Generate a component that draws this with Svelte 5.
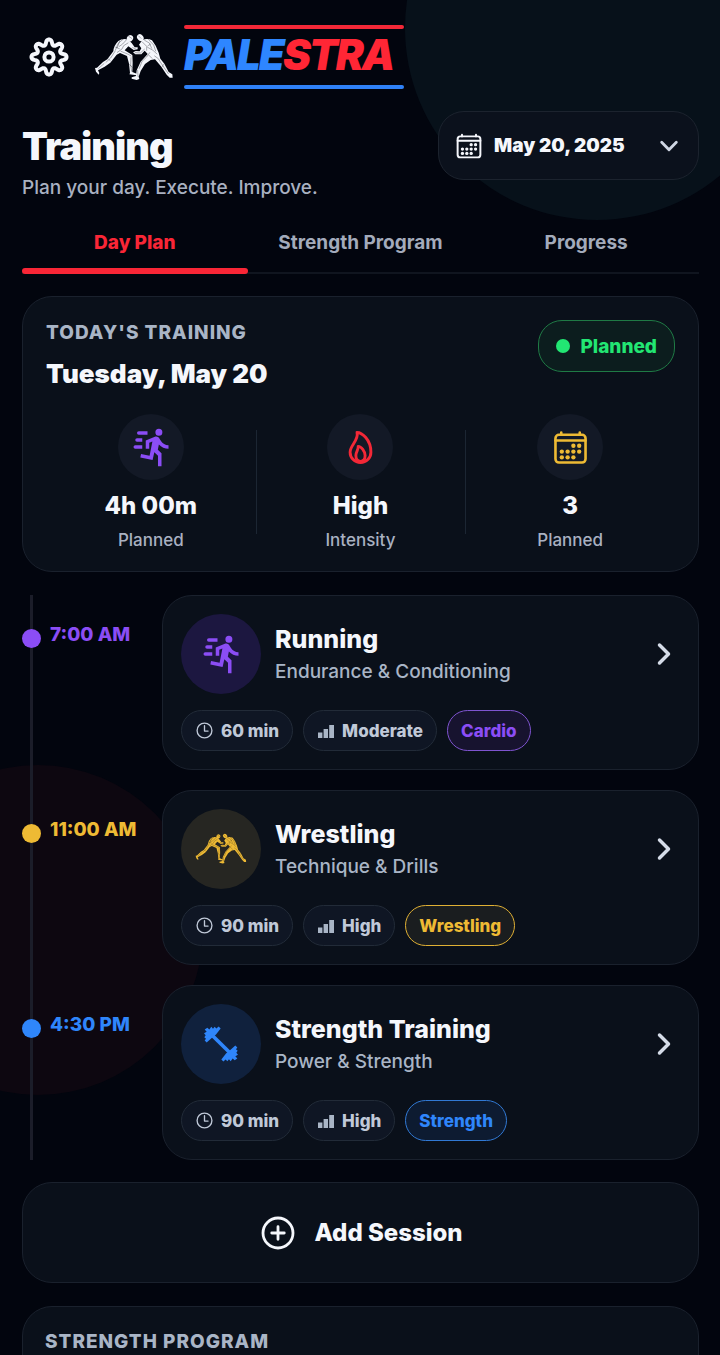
<script>
  const tabs = ['Day Plan', 'Strength Program', 'Progress'];
  let activeTab = $state('Day Plan');

  const stats = [
    { icon: 'run', color: '#8b4df5', value: '4h 00m', label: 'Planned' },
    { icon: 'flame', color: '#f32837', value: 'High', label: 'Intensity' },
    { icon: 'calendar', color: '#eeba34', value: '3', label: 'Planned' }
  ];

  const sessions = [
    { time: '7:00 AM', tone: 'purple', icon: 'run', title: 'Running', sub: 'Endurance & Conditioning', duration: '60 min', level: 'Moderate', tag: 'Cardio' },
    { time: '11:00 AM', tone: 'gold', icon: 'wrestlers', title: 'Wrestling', sub: 'Technique & Drills', duration: '90 min', level: 'High', tag: 'Wrestling' },
    { time: '4:30 PM', tone: 'blue', icon: 'dumbbell', title: 'Strength Training', sub: 'Power & Strength', duration: '90 min', level: 'High', tag: 'Strength' }
  ];

  // Eight-toothed cog outline, sampled around the circle
  const gear = (() => {
    const pts = [];
    for (let i = 0; i < 160; i++) {
      const a = (i / 160) * Math.PI * 2;
      const r = 14.9 + 2.6 * Math.tanh(1.3 * Math.cos(8 * a)) / Math.tanh(1.3);
      pts.push(`${(20 + r * Math.cos(a)).toFixed(2)} ${(20 + r * Math.sin(a)).toFixed(2)}`);
    }
    return 'M' + pts.join('L') + 'Z';
  })();
</script>

{#snippet icon(name, size)}
  {#if name === 'run'}
    <svg width={size} height={size} viewBox="0 0 24 24" fill="currentColor" aria-hidden="true">
      <path d="M16.5,5.5A2,2 0 0,0 18.5,3.5A2,2 0 0,0 16.5,1.5A2,2 0 0,0 14.5,3.5A2,2 0 0,0 16.5,5.5M12.9,19.4L13.9,15L16,17V23H18V15.5L15.9,13.5L16.5,10.5C17.89,12.09 19.89,13 22,13V11C20.24,11.03 18.6,10.11 17.7,8.6L16.7,7C16.34,6.4 15.7,6 15,6C14.7,6 14.5,6.1 14.2,6.1L9,8.3V13H11V9.6L12.8,8.9L11.2,17L6.3,16L5.9,18L12.9,19.4M4,9A1,1 0 0,1 3,8A1,1 0 0,1 4,7H7V9H4M5,5A1,1 0 0,1 4,4A1,1 0 0,1 5,3H10V5H5M3,13A1,1 0 0,1 2,12A1,1 0 0,1 3,11H7V13H3Z" />
    </svg>
  {:else if name === 'dumbbell'}
    <svg width={size} height={size} viewBox="62 61.500 126 126" fill="currentColor" aria-hidden="true">
      {#each [0, 180] as turn}
        <path transform="rotate({turn} 125 124.500)" d="M118 72L124 78L110 96L98 106L82 120L76 114L80 109L75 104L79 98L74 92L82 88L76 81L84 76L90 81L96 73L101 79L106 73L111 78Z" />
      {/each}
      <path d="M96 96L154 153" stroke="currentColor" stroke-width="11" />
    </svg>
  {:else if name === 'bars'}
    <svg width="18" height="14" viewBox="-1 0 18 14" fill="#a9b5c6" aria-hidden="true">
      <path d="M0 8.500h4.400v5.500H0zM5.600 5H10v9H5.600zM11.200 1h4.800v13h-4.800z" />
    </svg>
  {:else if name === 'wrestlers'}
    <svg width={size} height={size * 0.6} viewBox="280 100 240 142" fill="currentColor" aria-hidden="true">
      <ellipse cx="388" cy="115" rx="9" ry="10" transform="rotate(35 388 115)" />
      <path d="M382 119Q366 114 353 123Q339 137 338 154L320 178L307 186L289 203L283 204L286 215L294 224L296 219L292 211L312 200L329 188L348 164L358 159L379 168L385 191L388 219L386 223L408 226L410 222L395 216L396 188L395 165L372 151L383 139L399 150L411 148L411 142L402 142L393 129Z" />
      <ellipse cx="419" cy="113" rx="9" ry="11" transform="rotate(-40 419 113)" />
      <path d="M425 120Q440 114 454 121L465 137L474 158L479 176L491 191L504 216L515 223L516 233L507 233L498 224L482 200L463 178L450 180L433 192L420 213L414 230L416 237L408 240L393 236L393 232L406 228L408 211L420 185L441 162L432 152L422 163L404 163L397 157L405 153L417 154L422 145L415 134Z" />
      <g fill="none" stroke="#060a13" stroke-width="1" stroke-linecap="round">
        <path d="M384 109L393 115M376 121L366 132L356 139M368 117L352 131L344 151M382 129L369 137L364 147L350 157M357 123L350 143M343 154L330 174L316 187M361 154L383 163L391 168M391 173L390 194L393 214M310 191L294 205M396 143L404 146M345 142L356 146M324 178L329 182M387 194L395 202" />
        <path d="M414 108L421 115M432 121L446 129L453 145M444 119L459 135L465 153M425 126L438 139L438 151M441 142L457 151L469 162M431 148L419 159L404 158M447 158L438 171L424 184L416 205M462 168L473 176L484 194L503 221M411 211L412 229M445 166L454 175M488 193L486 200M449 133L442 137" />
      </g>
    </svg>
  {:else}
    <svg width={size} height={size} viewBox="0 0 512 512" fill="none" stroke="currentColor" stroke-width="36" stroke-linecap="round" stroke-linejoin="round" aria-hidden="true">
      {#if name === 'flame'}
        <g stroke-width="40">
          <path d="M112 320c0-93 124-165 96-272 66 0 192 96 192 272a144 144 0 01-288 0z" />
          <path d="M320 368c0 57.710-32 80-64 80s-64-22.290-64-80 40-86 32-128c42 0 96 70.290 96 128z" />
        </g>
      {:else if name === 'calendar'}
        <rect x="48" y="80" width="416" height="384" rx="48" />
        <path d="M128 48v32M384 48v32M464 160H48" />
        <g fill="currentColor" stroke="none">
          {#each [[296, 232], [376, 232], [136, 312], [216, 312], [296, 312], [376, 312], [136, 392], [216, 392], [296, 392]] as [cx, cy]}
            <circle {cx} {cy} r="30" />
          {/each}
        </g>
      {:else if name === 'clock'}
        <circle cx="256" cy="256" r="200" />
        <path d="M256 128v144h96" />
      {:else if name === 'forward'}
        <path stroke-width="56" d="M184 112l144 144-144 144" />
      {:else if name === 'down'}
        <path stroke-width="56" d="M112 184l144 144 144-144" />
      {:else if name === 'add'}
        <circle cx="256" cy="256" r="192" />
        <path d="M256 176v160M336 256H176" />
      {/if}
    </svg>
  {/if}
{/snippet}

<div class="page">
  <div class="glow cool"></div>
  <div class="glow warm"></div>

  <header class="brand">
    <button class="gear" aria-label="Settings">
      <svg width="40" height="40" viewBox="0 0 40 40" fill="none" stroke="currentColor" stroke-width="4" stroke-linejoin="round" aria-hidden="true">
        <path d={gear} />
        <circle cx="20" cy="20" r="4.600" />
      </svg>
    </button>
    <span class="emblem">{@render icon('wrestlers', 80)}</span>
    <div class="wordmark"><span class="pale">PALE</span><span class="stra">STRA</span></div>
  </header>

  <div class="heading">
    <div>
      <h1>Training</h1>
      <p>Plan your day. Execute. Improve.</p>
    </div>
    <button class="date">
      {@render icon('calendar', 28)}
      <span>May 20, 2025</span>
      {@render icon('down', 26)}
    </button>
  </div>

  <nav class="tabs">
    {#each tabs as tab}
      <button class:active={activeTab === tab} onclick={() => (activeTab = tab)}>{tab}</button>
    {/each}
  </nav>

  <section class="card summary">
    <div class="summary-head">
      <div>
        <h2 class="eyebrow">TODAY'S TRAINING</h2>
        <p class="day">Tuesday, May 20</p>
      </div>
      <span class="status"><i></i>Planned</span>
    </div>
    <div class="stats">
      {#each stats as s}
        <div class="stat">
          <span class="disc" style="color: {s.color}">{@render icon(s.icon, s.icon === 'run' ? 42 : 37)}</span>
          <strong>{s.value}</strong>
          <span class="stat-label">{s.label}</span>
        </div>
      {/each}
    </div>
  </section>

  <ol class="timeline">
    {#each sessions as s}
      <li class={s.tone}>
        <div class="when"><i></i><time>{s.time}</time></div>
        <button class="card session">
          <span class="top">
            <span class="badge">{@render icon(s.icon, s.icon === 'wrestlers' ? 52 : 42)}</span>
            <span class="names">
              <span class="title">{s.title}</span>
              <span class="sub">{s.sub}</span>
            </span>
            <span class="go">{@render icon('forward', 32)}</span>
          </span>
          <span class="chips">
            <span class="chip">{@render icon('clock', 19)}{s.duration}</span>
            <span class="chip">{@render icon('bars', 18)}{s.level}</span>
            <span class="chip tag">{s.tag}</span>
          </span>
        </button>
      </li>
    {/each}
  </ol>

  <button class="card add">{@render icon('add', 40)}Add Session</button>

  <section class="card program">
    <h2 class="eyebrow">STRENGTH PROGRAM</h2>
  </section>
</div>

<style>
  :global(body) {
    background: #02050e;
  }
  .page {
    position: relative;
    box-sizing: border-box;
    height: 100vh;
    overflow: hidden;
    padding: 25px 21px 0 22px;
    background: #02050e;
    color: #f5f7fc;
    font-family: Inter, 'Liberation Sans', sans-serif;
  }
  .page > :not(.glow) {
    position: relative;
  }
  button {
    border: 0;
    padding: 0;
    margin: 0;
    background: none;
    color: inherit;
    font: inherit;
    cursor: pointer;
  }
  h1, h2, p, ol {
    margin: 0;
    padding: 0;
  }
  svg {
    display: block;
    flex: none;
  }
  .glow {
    position: absolute;
    border-radius: 50%;
  }
  .cool {
    width: 384px;
    height: 384px;
    top: -164px;
    right: -69px;
    background: #07111a;
  }
  .warm {
    width: 330px;
    height: 330px;
    top: 765px;
    left: -127px;
    background: #0d0710;
  }

  .brand {
    display: flex;
    align-items: center;
    height: 64px;
    padding-left: 7px;
  }
  .emblem {
    margin: 0 10px 0 25px;
  }
  .wordmark {
    box-sizing: border-box;
    position: relative;
    width: 220px;
    height: 64px;
    font-size: 42px;
    line-height: 60px;
    font-weight: 900;
    font-style: italic;
    letter-spacing: -2px;
    white-space: nowrap;
  }
  .wordmark::before,
  .wordmark::after {
    content: '';
    position: absolute;
    left: 0;
    right: 0;
    height: 4px;
    border-radius: 2px;
  }
  .wordmark::before {
    top: 0;
    background: #f32837;
  }
  .wordmark::after {
    bottom: 0;
    background: #2f81f7;
  }
  .pale { color: #2e86ff; }
  .stra { color: #ff2635; }

  .heading {
    display: flex;
    justify-content: space-between;
    align-items: flex-start;
    margin-top: 22px;
  }
  h1 {
    margin-top: 11px;
    font-size: 38px;
    line-height: 48px;
    font-weight: 900;
    letter-spacing: -1px;
  }
  .heading p {
    margin-top: 6px;
    font-size: 19px;
    line-height: 24px;
    font-weight: 500;
    color: #a9b1c1;
  }
  .date {
    box-sizing: border-box;
    display: flex;
    align-items: center;
    gap: 11px;
    width: 261px;
    height: 69px;
    padding: 0 16px;
    border: 1px solid #1c232e;
    border-radius: 26px;
    background: #0b111c;
    font-size: 19px;
    font-weight: 900;
  }
  .date :global(svg:last-child) {
    margin-left: auto;
    color: #cfd6e3;
  }

  .tabs {
    display: grid;
    grid-template-columns: repeat(3, 1fr);
    margin-top: 9px;
    border-bottom: 2px solid #10151f;
  }
  .tabs button {
    position: relative;
    height: 63px;
    padding-top: 3px;
    font-size: 19px;
    font-weight: 700;
    color: #a3abbb;
  }
  .tabs button.active {
    color: #f92636;
    font-weight: 800;
  }
  .tabs button.active::after {
    content: '';
    position: absolute;
    left: 0;
    right: 0;
    bottom: -2px;
    height: 6px;
    border-radius: 3px;
    background: #f92636;
  }

  .card {
    box-sizing: border-box;
    border: 1px solid #1a212d;
    border-radius: 30px;
    background: #0a101a;
  }
  .summary {
    margin-top: 22px;
    padding: 23px 23px 21px;
  }
  .summary-head {
    display: flex;
    justify-content: space-between;
  }
  .eyebrow {
    font-size: 19px;
    line-height: 26px;
    font-weight: 800;
    letter-spacing: 1px;
    color: #a9b5c6;
  }
  .day {
    margin-top: 11px;
    font-size: 26px;
    line-height: 34px;
    font-weight: 900;
  }
  .status {
    box-sizing: border-box;
    display: flex;
    align-items: center;
    gap: 10px;
    height: 52px;
    padding: 0 17px;
    border: 1px solid #1f7a45;
    border-radius: 24px;
    background: #0c1d1e;
    color: #22e673;
    font-size: 19px;
    font-weight: 800;
  }
  .status i {
    width: 14px;
    height: 14px;
    border-radius: 50%;
    background: #22e673;
  }
  .stats {
    display: grid;
    grid-template-columns: repeat(3, 1fr);
    margin-top: 23px;
  }
  .stat {
    position: relative;
    display: flex;
    flex-direction: column;
    align-items: center;
  }
  .stat + .stat::before {
    content: '';
    position: absolute;
    left: 0;
    top: 16px;
    bottom: 16px;
    width: 1px;
    background: #1c2633;
  }
  .disc {
    display: grid;
    place-items: center;
    width: 66px;
    height: 66px;
    border-radius: 50%;
    background: #131926;
  }
  .stat strong {
    margin-top: 11px;
    font-size: 24px;
    line-height: 30px;
    font-weight: 800;
  }
  .stat-label {
    margin-top: 9px;
    font-size: 17px;
    line-height: 20px;
    font-weight: 500;
    color: #a9b1c1;
  }

  .timeline {
    display: grid;
    gap: 20px;
    margin-top: 23px;
    list-style: none;
  }
  .timeline::before {
    content: '';
    position: absolute;
    left: 8px;
    top: 0;
    bottom: 0;
    width: 3px;
    background: #1b1d29;
  }
  .timeline li {
    display: grid;
    grid-template-columns: 140px 1fr;
    position: relative;
  }
  .purple { --tone: #8b4df5; --disc: #1c1740; --tint: #17132f; --line: #7f54d0; }
  .gold { --tone: #eeba34; --disc: #262622; --tint: #1a1d1f; --line: #e0b034; }
  .blue { --tone: #2f86fb; --disc: #10213d; --tint: #0d1b31; --line: #3179d4; }
  .when {
    display: flex;
    align-items: flex-start;
    gap: 9px;
    padding-top: 28px;
    color: var(--tone);
    font-size: 19px;
    line-height: 24px;
    font-weight: 800;
    white-space: nowrap;
  }
  .when i {
    width: 19px;
    height: 19px;
    margin-top: 6px;
    border-radius: 50%;
    background: var(--tone);
  }
  .session {
    display: block;
    padding: 18px;
    text-align: left;
  }
  .top {
    display: flex;
    align-items: center;
    gap: 14px;
  }
  .badge {
    display: grid;
    place-items: center;
    width: 80px;
    height: 80px;
    border-radius: 50%;
    background: var(--disc);
    color: var(--tone);
  }
  .names {
    flex: 1;
    min-width: 0;
  }
  .title,
  .sub {
    display: block;
  }
  .title {
    font-size: 25px;
    line-height: 34px;
    font-weight: 800;
  }
  .sub {
    margin-top: 2px;
    font-size: 19px;
    line-height: 28px;
    font-weight: 500;
    color: #a9b5c6;
  }
  .go {
    color: #d5dce8;
  }
  .chips {
    display: flex;
    flex-wrap: wrap;
    gap: 10px;
    margin-top: 16px;
  }
  .chip {
    box-sizing: border-box;
    display: flex;
    align-items: center;
    gap: 7px;
    height: 41px;
    padding: 0 13px;
    border: 1px solid #222b38;
    border-radius: 21px;
    background: #0f1624;
    color: #c0c9d8;
    font-size: 17px;
    font-weight: 800;
  }
  .chip.tag {
    border-color: var(--line);
    background: var(--tint);
    color: var(--tone);
  }
  .add {
    display: flex;
    align-items: center;
    justify-content: center;
    gap: 16px;
    width: 100%;
    height: 101px;
    margin-top: 22px;
    font-size: 24px;
    font-weight: 800;
  }
  .program {
    min-height: 240px;
    margin-top: 23px;
    padding: 22px;
  }
</style>
